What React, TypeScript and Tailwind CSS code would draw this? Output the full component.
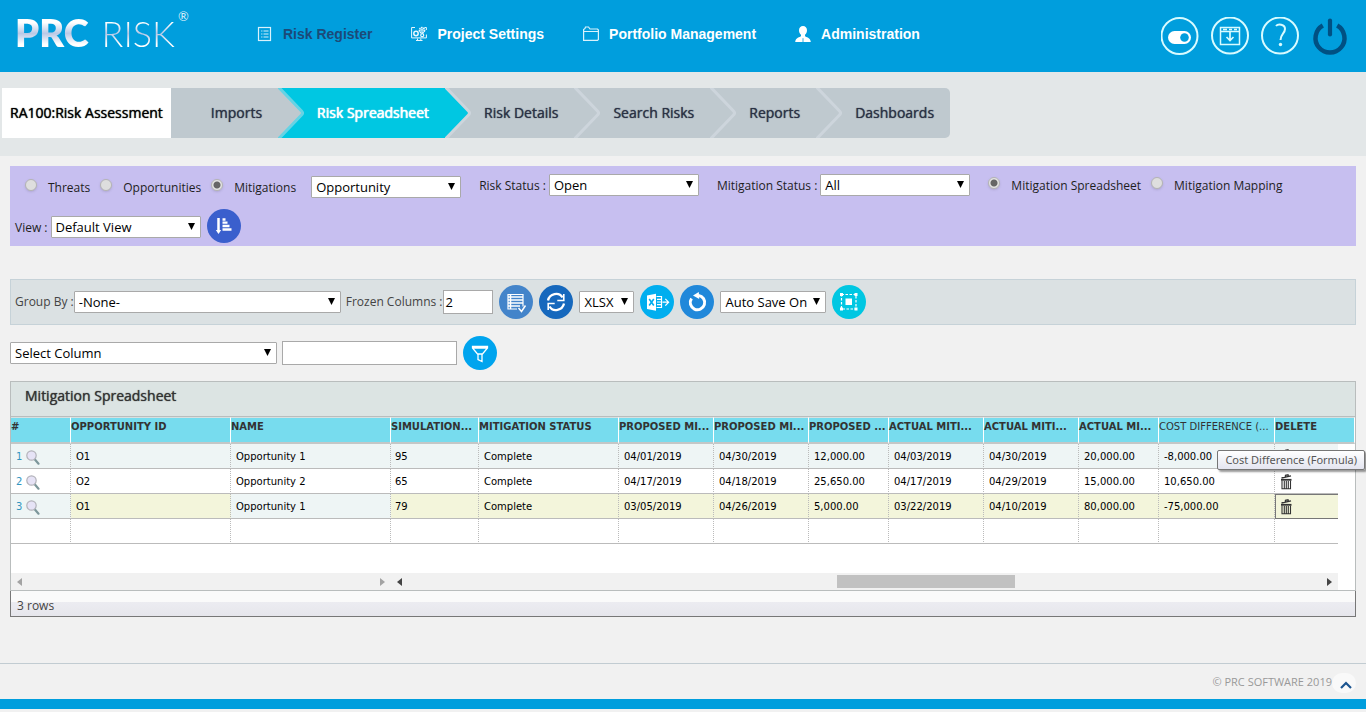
import type { ReactNode } from 'react';
import { clsx } from 'clsx';

const menu = [
  { label: 'Risk Register', icon: <RegisterIcon />, active: true },
  { label: 'Project Settings', icon: <SettingsIcon />, active: false },
  { label: 'Portfolio Management', icon: <FolderIcon />, active: false },
  { label: 'Administration', icon: <UserIcon />, active: false },
];

const tabs = ['Imports', 'Risk Spreadsheet', 'Risk Details', 'Search Risks', 'Reports', 'Dashboards'];
const activeTab = 1;

const columns = [
  { label: '#', width: 'w-[60px]' },
  { label: 'OPPORTUNITY ID', width: 'w-[160px]' },
  { label: 'NAME', width: 'w-[160px]' },
  { label: 'SIMULATION...', width: 'w-[88px]' },
  { label: 'MITIGATION STATUS', width: 'w-[140px]' },
  { label: 'PROPOSED MI...', width: 'w-[95px]' },
  { label: 'PROPOSED MI...', width: 'w-[95px]' },
  { label: 'PROPOSED ...', width: 'w-[80px]' },
  { label: 'ACTUAL MITI...', width: 'w-[95px]' },
  { label: 'ACTUAL MITI...', width: 'w-[95px]' },
  { label: 'ACTUAL MI...', width: 'w-[80px]' },
  { label: 'COST DIFFERENCE (...', width: 'w-[116px]' },
];

const rows = [
  ['O1', 'Opportunity 1', '95', 'Complete', '04/01/2019', '04/30/2019', '12,000.00', '04/03/2019', '04/30/2019', '20,000.00', '-8,000.00'],
  ['O2', 'Opportunity 2', '65', 'Complete', '04/17/2019', '04/18/2019', '25,650.00', '04/17/2019', '04/29/2019', '15,000.00', '10,650.00'],
  ['O1', 'Opportunity 1', '79', 'Complete', '03/05/2019', '04/26/2019', '5,000.00', '03/22/2019', '04/10/2019', '80,000.00', '-75,000.00'],
];

function RegisterIcon() {
  return (
    <svg width="16" height="16" viewBox="0 0 16 16" fill="none" stroke="#d9f2fc">
      <rect x="1.500" y="1.500" width="12" height="13" strokeWidth="1.200" />
      <path d="M6.500 5h5M6.500 8h5M6.500 11h5M4.200 5h1.200M4.200 8h1.200M4.200 11h1.200" strokeWidth="1.200" />
    </svg>
  );
}

function SettingsIcon() {
  return (
    <svg width="16" height="16" viewBox="0 0 16 16" fill="none" stroke="#e6f7ff">
      <path d="M4 1.500H.6v10.400h14.800V8.500M15.400 4V1.500h-2M5 14.500h6.500M6.500 12.500v2M9.800 12.500v2" />
      <circle cx="5" cy="7.500" r="2.200" strokeWidth="1.500" />
      <circle cx="11" cy="4.200" r="2.500" strokeWidth="1.800" strokeDasharray="1.600 0.500" />
      <circle cx="11" cy="4.200" r="1" />
      <circle cx="11.200" cy="9.200" r="1.500" strokeWidth="1.200" />
    </svg>
  );
}

function FolderIcon() {
  return (
    <svg width="16" height="16" viewBox="0 0 16 16" fill="none" stroke="#d9f2fc">
      <path d="M.6 14.400V3.500L2 2.500l.5-1.500h3l1.500 2h7.500l.9 1v9.500l-.9.900zM.6 5.500h14.800" strokeWidth="1.200" />
    </svg>
  );
}

function UserIcon() {
  return (
    <svg width="16" height="16" viewBox="0 0 16 16" fill="#fff">
      <path d="M8 0C5.600 0 4 1.700 4 4.300c0 2 .9 3.700 2 4.500v1.400c-1 .9-5.500 1.200-5.800 5.800h15.600c-.3-4.600-4.800-4.900-5.800-5.800V8.800c1.100-.8 2-2.500 2-4.500C12 1.700 10.400 0 8 0z" />
      <path d="M8 12.200v3.800" stroke="#009edd" strokeWidth="0.800" />
    </svg>
  );
}

function HeaderButton({ label, children }: { label: string; children: ReactNode }) {
  return (
    <button aria-label={label} className="size-[38px]">
      <svg width="38" height="38" viewBox="0 0 38 38" fill="none" stroke="#d8fbff">
        {children}
      </svg>
    </button>
  );
}

function RoundButton({ label, className, children }: { label: string; className: string; children: ReactNode }) {
  return (
    <button aria-label={label} className={clsx('size-[34px] shrink-0 rounded-full', className)}>
      <svg width="34" height="34" viewBox="0 0 34 34" fill="none" stroke="#fff">
        {children}
      </svg>
    </button>
  );
}

function Select({ id, value, className, label }: { id: string; value: string; className: string; label?: string }) {
  return (
    <span className={clsx('relative inline-block', className)}>
      <select
        id={id}
        aria-label={label}
        className="block h-[22px] w-full appearance-none rounded-[1px] border border-[#a9a9a9] bg-white pl-1 text-[13px] leading-5 text-black"
      >
        <option>{value}</option>
      </select>
      <svg className="pointer-events-none absolute right-[6px] top-[7px]" width="7" height="7" viewBox="0 0 7 7">
        <path d="M0 0h7L3.500 7z" fill="#000" />
      </svg>
    </span>
  );
}

function Radio({ name, label, checked }: { name: string; label: string; checked?: boolean }) {
  return (
    <label className="flex items-start gap-[11px]">
      <input
        type="radio"
        name={name}
        defaultChecked={checked}
        className="mt-[3px] size-3 appearance-none rounded-full border border-[#b4b4b4] bg-[#dedede] shadow-sm checked:bg-[radial-gradient(circle,#666_0_3px,#e4e4e4_4px)]"
      />
      {label}
    </label>
  );
}

function Chevron({ from, to, line }: { from: string; to: string; line: string }) {
  return (
    <svg width="26" height="50" viewBox="0 0 26 50" className="shrink-0">
      <rect width="26" height="50" fill={to} />
      <path d="M0 0l23 23q2 2 0 4L0 50z" fill={from} />
      <path d="M0-1.500l23.500 24.500q2 2 0 4L0 51.500" fill="none" stroke={line} strokeWidth="3" />
    </svg>
  );
}

function Magnifier() {
  return (
    <svg width="14" height="15" viewBox="0 0 14 15">
      <path d="M8.500 9l4 4.700" stroke="#7d979b" strokeWidth="2.200" strokeLinecap="round" />
      <circle cx="5.500" cy="5.500" r="4.700" fill="#e6e3f6" stroke="#b3b3ba" strokeWidth="1.200" />
    </svg>
  );
}

function Trash() {
  return (
    <svg width="11" height="16" viewBox="0 0 11 16" fill="none" stroke="#333">
      <path d="M.5 4l9.500-2.200M4.200 3l.3-1.700 2.500-.5.400 1.300" strokeWidth="1.300" />
      <path d="M0 5.800h10.500" strokeWidth="1.800" />
      <path d="M1 6.500v8.300h8.500V6.500M3.300 7v7.500M5.300 7v7.500M7.300 7v7.500" strokeWidth="1.100" />
    </svg>
  );
}

function ScrollArrow({ dir, color }: { dir: 'left' | 'right'; color: string }) {
  return (
    <button aria-label={`Scroll ${dir}`} className="flex size-[17px] shrink-0 items-center justify-center">
      <svg width="5" height="8" viewBox="0 0 5 8">
        <path d={dir === 'left' ? 'M5 0v8L0 4z' : 'M0 0v8l5-4z'} fill={color} />
      </svg>
    </button>
  );
}

function Header() {
  return (
    <header className="flex h-[72px] items-center bg-[#009edd]">
      <a href="#" className="flex w-[257px] shrink-0 items-start pb-2 pl-[15px] font-['Lato',sans-serif] text-[38px] leading-[44px]">
        <span className="flex items-baseline gap-[13px] whitespace-nowrap bg-[linear-gradient(#fff_28%,#b9c9e6_52%,#fff_76%)] bg-clip-text text-transparent">
          <b className="font-extrabold">PRC</b>
          <span className="text-[36px] font-light">RISK</span>
        </span>
        <span className="pl-[3px] text-[13px] leading-[12px] text-[#d5ecf8]">®</span>
      </a>
      <nav className="flex gap-[39px] pb-1 font-['Liberation_Sans',Arial,sans-serif] text-sm font-bold">
        {menu.map((item) => (
          <a
            key={item.label}
            href="#"
            className={clsx('flex items-center gap-[10px] whitespace-nowrap', item.active ? 'text-[#1c4a78]' : 'text-white')}
          >
            {item.icon}
            {item.label}
          </a>
        ))}
      </nav>
      <div className="ml-auto flex gap-3 pr-[17px]">
        <HeaderButton label="Toggle">
          <circle cx="18.500" cy="19" r="18" strokeWidth="2" />
          <rect x="7" y="14" width="23" height="13" rx="6.500" fill="#fff" stroke="none" />
          <circle cx="23.500" cy="20.500" r="4.300" fill="#009edd" stroke="none" />
        </HeaderButton>
        <HeaderButton label="Download">
          <circle cx="19" cy="18.500" r="18" strokeWidth="2" />
          <path d="M9.500 10.500h19v17h-19zM9.500 14.500h19M12 12.500h4M18 12.500h3M23 12.500h3" strokeWidth="1.500" />
          <path d="M19 15v8M15.500 20l3.500 3.500 3.500-3.500" strokeWidth="1.700" />
        </HeaderButton>
        <HeaderButton label="Help">
          <circle cx="19" cy="18.500" r="18" strokeWidth="2" />
          <path d="M15 9c2-2.500 9-2 9 3 0 4.500-4.500 5-4.500 11" strokeWidth="2" />
          <circle cx="19.500" cy="27.500" r="1.700" fill="#d8fbff" stroke="none" />
        </HeaderButton>
        <HeaderButton label="Log out">
          <path d="M11.800 8.500a14.500 14.500 0 1 0 14.400 0" stroke="#005083" strokeWidth="4.500" />
          <path d="M19 3.500v14" stroke="#005083" strokeWidth="4.200" strokeLinecap="round" />
        </HeaderButton>
      </div>
    </header>
  );
}

function ProjectTabs() {
  return (
    <nav className="flex overflow-hidden bg-[#e3e7e8] pb-[18px] pl-[2px] pt-4 text-sm font-medium [text-shadow:0_0_1px]">
      <a href="#" className="flex h-[50px] items-center whitespace-nowrap bg-white px-2 text-black">
        RA100:Risk Assessment
      </a>
      <div className="flex overflow-hidden rounded-r-[5px]">
        {tabs.map((tab, i) => (
          <div key={tab} className="flex">
            {i > 0 && (
              <Chevron
                from={i - 1 === activeTab ? '#00c7e2' : '#bfc9cf'}
                to={i === activeTab ? '#00c7e2' : '#bfc9cf'}
                line={i === activeTab ? '#66d3e4' : '#cdd5dc'}
              />
            )}
            <a
              href="#"
              className={clsx(
                'flex h-[50px] items-center whitespace-nowrap pr-4',
                i === 0 ? 'pl-10' : 'pl-[13px]',
                i === activeTab ? 'bg-[#00c7e2] text-white [text-shadow:0_0_1px,0_0_1px]' : 'bg-[#bfc9cf] text-[#2b3245]',
              )}
            >
              {tab}
            </a>
          </div>
        ))}
      </div>
    </nav>
  );
}

function Filters() {
  return (
    <section className="mx-[10px] mt-[10px] bg-[#c7bff0] pb-[3px] pt-2 text-[12px] leading-[23px] text-[#1e1e1e]">
      <div className="flex flex-wrap items-start gap-x-[18px]">
        <div className="flex gap-[10px] pl-[15px] pt-[2px]">
          <Radio name="kind" label="Threats" />
          <Radio name="kind" label="Opportunities" />
          <Radio name="kind" label="Mitigations" checked />
          <Select id="kind-select" label="Mitigation type" value="Opportunity" className="ml-[5px] w-[150px]" />
        </div>
        <div className="flex gap-[3px]">
          <label htmlFor="risk-status">Risk Status :</label>
          <Select id="risk-status" value="Open" className="w-[150px]" />
        </div>
        <div className="flex gap-[3px]">
          <label htmlFor="mitigation-status">Mitigation Status :</label>
          <Select id="mitigation-status" value="All" className="w-[150px]" />
        </div>
        <div className="flex gap-[10px]">
          <Radio name="mode" label="Mitigation Spreadsheet" checked />
          <Radio name="mode" label="Mitigation Mapping" />
        </div>
      </div>
      <div className="mt-[10px] flex items-center pl-[5px]">
        <label htmlFor="view" className="mt-[2px]">
          View :
        </label>
        <Select id="view" value="Default View" className="ml-[3px] mr-[6px] mt-[2px] w-[150px]" />
        <RoundButton label="Sort" className="bg-[#3a5fcd]">
          <path d="M11.500 9v13" strokeWidth="2.500" />
          <path d="M8.800 21h5.400l-2.700 4z" fill="#fff" stroke="none" />
          <path d="M15.500 10.500h3M15.500 13.700h5M15.500 17h7M15.500 20.500h9" strokeWidth="2.300" />
        </RoundButton>
      </div>
    </section>
  );
}

function Toolbar() {
  return (
    <section className="mx-[10px] mt-[33px] flex flex-wrap items-center border border-[#c6d2d8] bg-[#dbe1e3] px-1 py-[5px] text-[12px] text-[#444]">
      <label htmlFor="group-by">Group By :</label>
      <Select id="group-by" value="-None-" className="mr-[5px] w-[267px]" />
      <label htmlFor="frozen">Frozen Columns :</label>
      <input
        id="frozen"
        defaultValue="2"
        className="ml-px h-6 w-[50px] border border-[#a9a9a9] bg-white px-px text-[13px] text-black"
      />
      <div className="ml-[6px] flex items-center gap-[6px]">
        <RoundButton label="Edit columns" className="bg-[#4384ca]">
          <path d="M9 9.500h15v12M9 9v15h9" strokeWidth="1.200" />
          <path d="M9 12h15M12 15h12M12 18h12M12 21h9M11.500 9v15M9 15h2M9 18h2M9 21h2" strokeWidth="1.500" />
          <path d="M19.500 23l3 3.500 4-6" strokeWidth="1.500" />
        </RoundButton>
        <RoundButton label="Refresh" className="bg-[#1668bd]">
          <path d="M9 15.500c1.500-7 11-9 14.500-3M25 18.500c-1.500 7-11 9-14.500 3" strokeWidth="2.300" />
          <path d="M24.800 9v6.500h-6.500M9.200 25v-6.500h6.500" strokeWidth="1.600" />
        </RoundButton>
        <Select id="format" label="Export format" value="XLSX" className="w-[55px]" />
        <RoundButton label="Export" className="bg-[#00aeef]">
          <path d="M7 10.500l9-1.800v17l-9-1.800z" fill="#fff" stroke="none" />
          <path d="M9.200 14l4.600 6.500M13.800 14l-4.600 6.500" stroke="#00aeef" strokeWidth="1.600" />
          <path d="M16.500 11.500h5v11h-5M17 14.300h5M17 17h5M17 19.700h5M22.500 17.200h6M25.300 13.800l3.300 3.400-3.300 3.400" strokeWidth="1.200" />
        </RoundButton>
        <RoundButton label="Undo" className="bg-[#2088da]">
          <path d="M11.500 13.500a7.200 7.200 0 1 0 7-3.100" strokeWidth="3" />
          <path d="M18.800 7l.4 7-6.200-3.500z" fill="#fff" stroke="none" />
        </RoundButton>
        <Select id="autosave" label="Auto save" value="Auto Save On" className="w-[106px]" />
        <RoundButton label="Fit" className="bg-[#00c7e2]">
          <path d="M9.500 9.500h14.500v14.500H9.500z" strokeDasharray="2.500 1.500" strokeWidth="1.200" />
          <path d="M8 8h3v3H8zM22.500 8h3v3h-3zM8 22.500h3v3H8zM22.500 22.500h3v3h-3zM13.500 13.500h6.500v6.500h-6.500z" fill="#fff" stroke="none" />
        </RoundButton>
      </div>
    </section>
  );
}

function ColumnFilter() {
  return (
    <div className="mx-[10px] mt-[11px] flex items-center">
      <Select id="filter-column" label="Filter column" value="Select Column" className="w-[267px]" />
      <input aria-label="Filter value" className="ml-[5px] mr-[6px] h-6 w-[175px] border border-[#a9a9a9] bg-white px-1 text-[13px]" />
      <RoundButton label="Filter" className="bg-[#00a4ee]">
        <path d="M9.500 10.500h15v1.500l-5.500 6.500v7l-4-2v-5L9.500 12zM9.500 12h15M15 18h4" strokeWidth="1.300" />
      </RoundButton>
    </div>
  );
}

function Grid() {
  return (
    <section className="relative mx-[10px] mt-[11px]">
      <div className="border border-[#b9bdbd] bg-white">
        <h2 className="h-[35px] border-b border-[#b9bdbd] bg-[#dce4e3] pl-[14px] text-sm font-medium leading-7 text-[#333] [text-shadow:0_0_1px]">
          Mitigation Spreadsheet
        </h2>
        <div className="overflow-x-auto">
          <table className="w-full table-fixed border-separate border-spacing-0 text-left font-['DejaVu_Sans',Verdana,sans-serif] text-[10px] leading-4">
            <colgroup>
              {columns.map((col, i) => (
                <col key={i} className={col.width} />
              ))}
              <col />
              <col className="w-[17px]" />
            </colgroup>
            <thead>
              <tr className="h-[27px] bg-[#77dcee] align-top text-[#333]">
                {columns.map((col, i) => (
                  <th
                    key={i}
                    className={clsx(
                      'whitespace-nowrap border-b-2 border-r border-t border-b-[#c3c7c7] border-r-white border-t-[#d8e0e0] p-0 pt-px',
                      i === 11 ? 'font-normal' : 'font-bold',
                    )}
                  >
                    {col.label}
                  </th>
                ))}
                <th
                  colSpan={2}
                  className="border-b-2 border-r border-t border-b-[#c3c7c7] border-r-white border-t-[#d8e0e0] p-0 pt-px font-bold"
                >
                  DELETE
                </th>
              </tr>
            </thead>
            <tbody className="text-black">
              {rows.map((row, r) => (
                <tr key={r} className={clsx('h-[25px]', r === 0 && 'bg-[#eef5f5]', r === 2 && 'bg-[#f3f5db]')}>
                  <td
                    className={clsx(
                      'border-b border-r border-[#bbb] p-0 pl-[5px] pt-[2px] text-[#3295c0] [border-right-style:dotted]',
                      r === 2 && 'bg-[#eef5f5]',
                    )}
                  >
                    <span className="flex items-center gap-1">
                      {r + 1}
                      <Magnifier />
                    </span>
                  </td>
                  {row.map((value, c) => (
                    <td
                      key={c}
                      className={clsx(
                        'whitespace-nowrap border-b border-r border-[#bbb] p-0 pt-[2px] [border-right-style:dotted]',
                        c === 2 ? 'pl-1' : 'pl-[5px]',
                        r === 2 && c === 1 && 'bg-[#eef5f5]',
                      )}
                    >
                      {value}
                    </td>
                  ))}
                  <td className={clsx('p-0', r === 2 ? 'border border-r-0 border-[#777] pl-[5px]' : 'border-b border-[#bbb] pl-[6px] pt-[2px]')}>
                    <button aria-label="Delete" className="flex">
                      <Trash />
                    </button>
                  </td>
                  <td className="bg-white p-0" />
                </tr>
              ))}
              <tr className="h-[25px]">
                {columns.map((col, i) => (
                  <td key={i} className="border-b border-r border-[#bbb] p-0 [border-right-style:dotted]" />
                ))}
                <td className="border-b border-[#bbb] p-0" />
                <td className="p-0" />
              </tr>
            </tbody>
          </table>
        </div>
        <div className="mr-[17px] mt-[29px] flex bg-[#f1f1f1]">
          <div className="flex w-[380px] shrink-0 justify-between">
            <ScrollArrow dir="left" color="#a3a3a3" />
            <ScrollArrow dir="right" color="#a3a3a3" />
          </div>
          <div className="flex flex-1 items-center">
            <ScrollArrow dir="left" color="#444" />
            <div className="flex-1">
              <div className="ml-[47%] h-[13px] w-[19.5%] bg-[#c1c1c1]" />
            </div>
            <ScrollArrow dir="right" color="#444" />
          </div>
        </div>
      </div>
      <div className="h-[26px] border border-t-0 border-[#777] bg-[linear-gradient(#fafafa_0_11px,#ececf1_11px,#e6e6ec)] pl-[6px] text-[12px] leading-[29px] text-[#444]">
        3 rows
      </div>
      <div
        role="tooltip"
        className="absolute -right-[9px] top-[69px] h-5 whitespace-nowrap rounded-[2px] border border-[#767676] bg-[linear-gradient(#fff,#e4e5f0)] px-[7px] font-['Noto_Sans',sans-serif] text-[11px] leading-[18px] text-[#575757] shadow-[2px_2px_2px_#0006]"
      >
        Cost Difference (Formula)
      </div>
    </section>
  );
}

function Footer() {
  return (
    <footer className="mt-[46px]">
      <div className="flex h-9 items-center justify-end border-t border-[#c2ccd2] pr-[10px] pt-[2px] text-[11px] text-[#999]">
        © PRC SOFTWARE 2019
        <button aria-label="Back to top" className="flex h-5 w-6 items-center justify-center rounded-full bg-[#f9f9f9] pl-[3px] pt-1">
          <svg width="12" height="8" viewBox="0 0 12 8" fill="none" stroke="#1c5590" strokeWidth="2.200">
            <path d="M1 7l5-5 5 5" />
          </svg>
        </button>
      </div>
      <div className="h-[10px] bg-[#009edd]" />
    </footer>
  );
}

export default function App() {
  return (
    <div className="min-h-screen overflow-x-hidden bg-[#f1f1f1] font-['Open_Sans',sans-serif]">
      <Header />
      <ProjectTabs />
      <Filters />
      <Toolbar />
      <ColumnFilter />
      <Grid />
      <Footer />
    </div>
  );
}
